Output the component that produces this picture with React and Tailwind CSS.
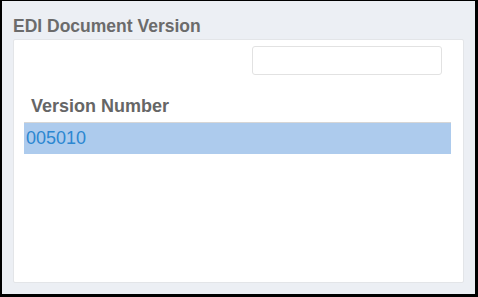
export default function App() {
  return (
    <div
      className="w-[478px] h-[297px] bg-[#eceff4] border-t-[1px] border-l-[2px] border-r-[3px] border-b-[3px] border-black flex flex-col"
      style={{ fontFamily: '"Liberation Sans", Arial, sans-serif' }}
    >
      <div className="pl-[11px] pt-[15px] h-[38px] text-[17.5px] leading-[20px] font-bold text-[#6b6b6b]">
        EDI Document Version
      </div>
      <div className="ml-[11px] w-[451px] h-[244px] bg-white border border-[#e3e5e8] rounded-[2px] flex flex-col">
        <div className="flex justify-end pt-[6px] pr-[21px]">
          <div className="w-[190px] h-[29px] border border-[#e2e2e2] rounded-[3px] bg-white" />
        </div>
        <div className="pl-[17px] mt-[21px] h-[26px] text-[18px] leading-[20px] font-bold text-[#666666]">
          Version Number
        </div>
        <div className="ml-[10px] w-[427px] h-[32px] border-t border-[#d6d6d6] bg-[#adcbed] flex items-center pl-[2px] text-[18px] text-[#2b87d1]">
          005010
        </div>
      </div>
    </div>
  );
}
